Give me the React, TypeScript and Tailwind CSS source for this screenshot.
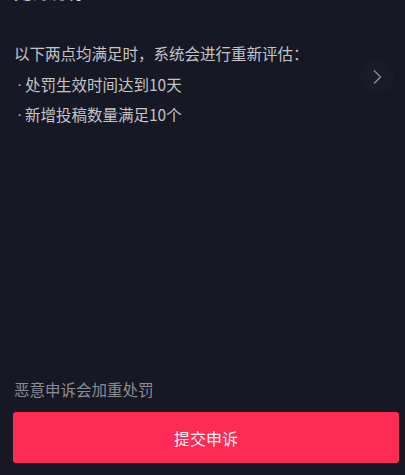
export default function App() {
  return (
    <div
      className="relative flex h-[475px] w-full flex-col overflow-hidden bg-[#161823] text-white"
      style={{ fontFamily: '"Noto Sans CJK SC", "Noto Sans", sans-serif' }}
    >
      {/* header text scrolled off the top */}
      <div className="-mt-[19px] px-[14px] text-[17px] font-medium leading-[22px] text-white/85">
        处罚说明
      </div>

      <div className="mt-[35px] px-[14px] text-[15.5px] leading-[30.5px] text-white/75">
        <p>以下两点均满足时，系统会进行重新评估：</p>
        <p className="flex items-center">
          <span className="w-[11px] pl-[3px]" style={{ fontFamily: '"Liberation Sans", sans-serif' }}>·</span>
          处罚生效时间达到10天
        </p>
        <p className="flex items-center">
          <span className="w-[11px] pl-[3px]" style={{ fontFamily: '"Liberation Sans", sans-serif' }}>·</span>
          新增投稿数量满足10个
        </p>
      </div>

      <div className="flex-1" />

      <div className="px-[14px] text-[15.5px] leading-[22px] text-white/50">恶意申诉会加重处罚</div>

      <div className="pl-[13px] pr-[6px] pt-[12px] pb-[12px]">
        <button className="flex h-[51px] w-full items-center justify-center rounded-[3px] bg-[#fe2c55] text-[16px] text-white/95">
          提交申诉
        </button>
      </div>

      <div className="absolute left-[360px] top-[60px] flex h-[34px] w-[34px] items-center justify-center rounded-full bg-[#191b25]">
        <svg width="12" height="16" viewBox="0 0 12 16" fill="none">
          <path d="M3 1.5 L9.5 8 L3 14.5" stroke="#8b8c93" strokeWidth="1.4" />
        </svg>
      </div>
    </div>
  );
}
